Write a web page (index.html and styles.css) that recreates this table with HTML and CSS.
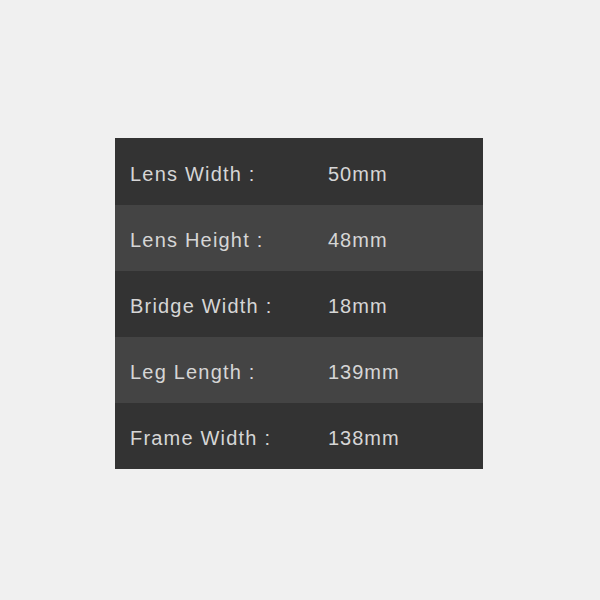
FILE: index.html
```html
<!DOCTYPE html>
<html>
<head>
<meta charset="utf-8">
<link rel="stylesheet" href="styles.css">
</head>
<body>
<div class="page">
  <div class="specs">
    <div class="row dark"><span class="label">Lens Width :</span><span class="value">50mm</span></div>
    <div class="row light"><span class="label">Lens Height :</span><span class="value">48mm</span></div>
    <div class="row dark"><span class="label">Bridge Width :</span><span class="value">18mm</span></div>
    <div class="row light"><span class="label">Leg Length :</span><span class="value">139mm</span></div>
    <div class="row dark"><span class="label">Frame Width :</span><span class="value">138mm</span></div>
  </div>
</div>
</body>
</html>
```
FILE: styles.css
```css
html, body {
  margin: 0;
  padding: 0;
  background: #f0f0f0;
}
.page {
  width: 600px;
  height: 600px;
  padding-top: 138px;
  padding-left: 115px;
  box-sizing: border-box;
}
.specs {
  width: 368px;
  display: flex;
  flex-direction: column;
}
.row {
  height: 66px;
  display: flex;
  align-items: center;
  padding-left: 15px;
  padding-top: 5px;
  box-sizing: border-box;
  font-family: "Liberation Sans", Arial, sans-serif;
  font-size: 20px;
  color: #d6d6d6;
}
.row:first-child { height: 67px; }
.dark { background: #333333; }
.light { background: #444444; }
.label { width: 198px; letter-spacing: 1.2px; }
.value { letter-spacing: 1px; }
```
